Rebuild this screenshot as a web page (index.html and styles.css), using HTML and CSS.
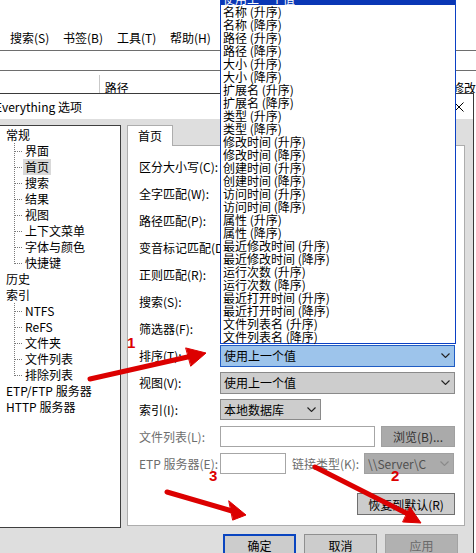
FILE: index.html
```html
<!DOCTYPE html>
<html lang="zh-CN">
<head>
<meta charset="utf-8">
<title>Everything 选项</title>
<link rel="stylesheet" href="styles.css">
</head>
<body>
<div class="screen">
  <div class="main">
    <div class="menubar">
      <span>搜索(S)</span><span>书签(B)</span><span>工具(T)</span><span>帮助(H)</span>
    </div>
    <div class="searchbar"></div>
    <div class="colheader">
      <span class="col-name"></span>
      <span class="col-path">路径</span>
      <span class="col-mod">修改</span>
    </div>
  </div>

  <div class="dialog">
    <div class="titlebar">
      <span class="title">Everything 选项</span>
      <svg class="close" viewBox="0 0 10 10"><path d="M0.5 0.5L9.5 9.5M9.5 0.5L0.5 9.5" stroke="#000" stroke-width="1" fill="none"/></svg>
    </div>
    <div class="dlgbody">
      <div class="content">
        <div class="tree">
          <div class="node">常规</div>
          <ul class="children">
            <li><span class="lab">界面</span></li>
            <li><span class="lab hl">首页</span></li>
            <li><span class="lab">搜索</span></li>
            <li><span class="lab">结果</span></li>
            <li><span class="lab">视图</span></li>
            <li><span class="lab">上下文菜单</span></li>
            <li><span class="lab">字体与颜色</span></li>
            <li><span class="lab">快捷键</span></li>
          </ul>
          <div class="node">历史</div>
          <div class="node">索引</div>
          <ul class="children">
            <li><span class="lab">NTFS</span></li>
            <li><span class="lab">ReFS</span></li>
            <li><span class="lab">文件夹</span></li>
            <li><span class="lab">文件列表</span></li>
            <li><span class="lab">排除列表</span></li>
          </ul>
          <div class="node">ETP/FTP 服务器</div>
          <div class="node">HTTP 服务器</div>
        </div>

        <div class="tabs">
          <div class="tabstrip"><div class="tab">首页</div></div>
          <div class="panel">
            <div class="row"><span class="lbl">区分大小写(C):</span></div>
            <div class="row"><span class="lbl">全字匹配(W):</span></div>
            <div class="row"><span class="lbl">路径匹配(P):</span></div>
            <div class="row"><span class="lbl">变音标记匹配(D):</span></div>
            <div class="row"><span class="lbl">正则匹配(R):</span></div>
            <div class="row"><span class="lbl">搜索(S):</span></div>
            <div class="row"><span class="lbl">筛选器(F):</span></div>
            <div class="row">
              <span class="lbl">排序(T):</span>
              <div class="combo wide focus"><span>使用上一个值</span><svg class="chev" viewBox="0 0 9 5"><polyline points="0.5,0.5 4.5,4.5 8.5,0.5" fill="none" stroke="#222" stroke-width="1.1"/></svg></div>
            </div>
            <div class="row">
              <span class="lbl">视图(V):</span>
              <div class="combo wide"><span>使用上一个值</span><svg class="chev" viewBox="0 0 9 5"><polyline points="0.5,0.5 4.5,4.5 8.5,0.5" fill="none" stroke="#222" stroke-width="1.1"/></svg></div>
            </div>
            <div class="row">
              <span class="lbl">索引(I):</span>
              <div class="combo small"><span>本地数据库</span><svg class="chev" viewBox="0 0 9 5"><polyline points="0.5,0.5 4.5,4.5 8.5,0.5" fill="none" stroke="#222" stroke-width="1.1"/></svg></div>
            </div>
            <div class="row">
              <span class="lbl dis">文件列表(L):</span>
              <div class="input filelist"></div>
              <div class="btn browse">浏览(B)...</div>
            </div>
            <div class="row">
              <span class="lbl dis">ETP 服务器(E):</span>
              <div class="input etp"></div>
              <span class="lbl2 dis">链接类型(K):</span>
              <div class="combo server"><span>\\Server\C</span><svg class="chev" viewBox="0 0 9 5"><polyline points="0.5,0.5 4.5,4.5 8.5,0.5" fill="none" stroke="#8a8a8a" stroke-width="1.1"/></svg></div>
            </div>
            <div class="restore-row"><div class="btn restore">恢复到默认(R)</div></div>
          </div>
        </div>
      </div>
      <div class="buttons">
        <div class="btn dlg default">确定</div>
        <div class="btn dlg">取消</div>
        <div class="btn dlg disabled">应用</div>
      </div>
    </div>
  </div>

  <ul class="droplist">
    <li class="sel">使用上一个值</li>
    <li>名称 (升序)</li>
    <li>名称 (降序)</li>
    <li>路径 (升序)</li>
    <li>路径 (降序)</li>
    <li>大小 (升序)</li>
    <li>大小 (降序)</li>
    <li>扩展名 (升序)</li>
    <li>扩展名 (降序)</li>
    <li>类型 (升序)</li>
    <li>类型 (降序)</li>
    <li>修改时间 (升序)</li>
    <li>修改时间 (降序)</li>
    <li>创建时间 (升序)</li>
    <li>创建时间 (降序)</li>
    <li>访问时间 (升序)</li>
    <li>访问时间 (降序)</li>
    <li>属性 (升序)</li>
    <li>属性 (降序)</li>
    <li>最近修改时间 (升序)</li>
    <li>最近修改时间 (降序)</li>
    <li>运行次数 (升序)</li>
    <li>运行次数 (降序)</li>
    <li>最近打开时间 (升序)</li>
    <li>最近打开时间 (降序)</li>
    <li>文件列表名 (升序)</li>
    <li>文件列表名 (降序)</li>
  </ul>

  <svg class="annot" viewBox="0 0 476 553">
    <g fill="#dc0000" stroke="#dc0000" stroke-linecap="round">
      <line x1="90" y1="379" x2="192" y2="356" stroke-width="5"/>
      <polygon points="186,348 206,353 191,366" stroke-width="1"/>
      <line x1="315" y1="467" x2="406" y2="513" stroke-width="5"/>
      <polygon points="403,522 421,523 410,507" stroke-width="1"/>
      <line x1="167" y1="492" x2="232" y2="511" stroke-width="5"/>
      <polygon points="229,501 246,515 233,520" stroke-width="1"/>
    </g>
    <g class="num">
      <text x="127" y="348">1</text>
      <text x="391" y="481">2</text>
      <text x="209" y="481">3</text>
    </g>
  </svg>
</div>
</body>
</html>
```
FILE: styles.css
```css
* { box-sizing: border-box; margin: 0; padding: 0; }
html, body { margin: 0; background: #fff; }
body {
  font-family: "Noto Sans CJK SC", "Noto Sans", sans-serif;
  font-size: 12px;
  color: #000;
}
ul { list-style: none; }

.screen {
  position: relative;
  width: 476px;
  height: 553px;
  overflow: hidden;
  background: #fff;
}

/* main window behind the dialog */
.main { padding-top: 28px; }
.menubar {
  display: grid;
  grid-template-columns: 53px 54px 53px auto;
  padding-left: 10px;
  height: 19px;
  line-height: 19px;
}
.searchbar {
  margin-top: 3px;
  height: 21px;
  border-top: 1px solid #6e6e6e;
  border-bottom: 1px solid #6e6e6e;
}
.colheader {
  display: flex;
  height: 22px;
  overflow: hidden;
  line-height: 14px;
}
.col-name { width: 101px; margin-top: 4px; border-right: 1px solid #c9c9c9; }
.col-path { width: 357px; padding: 10px 0 0 5px; }
.col-mod { padding-top: 10px; white-space: nowrap; }

/* dialog */
.dialog {
  margin-left: -8px;
  width: 482px;
  height: 470px;
  border: 1px solid #3a3a3a;
  background: #dedede;
}
.titlebar {
  display: flex;
  align-items: center;
  justify-content: space-between;
  height: 25px;
  background: #fff;
  padding: 0 9px 0 2px;
}
.title { line-height: 25px; white-space: nowrap; }
.close { width: 10px; height: 10px; display: block; }

.dlgbody { padding: 6px 8px 0 4px; }
.content { display: flex; gap: 6px; align-items: flex-start; }

/* tree */
.tree {
  width: 124px;
  height: 403px;
  border: 1px solid #3f3f3f;
  background: #fff;
  padding: 1px 0 0 8px;
  line-height: 16px;
  white-space: nowrap;
}
.node { height: 16px; }
.children li {
  position: relative;
  height: 16px;
  padding-left: 17px;
}
.children li::before {
  content: "";
  position: absolute;
  left: 9px;
  top: 8px;
  width: 8px;
  height: 1px;
  background: repeating-linear-gradient(to right, #7a7a7a 0 1px, transparent 1px 2px);
}
.children li::after {
  content: "";
  position: absolute;
  left: 8px;
  top: 0;
  width: 1px;
  height: 16px;
  background: repeating-linear-gradient(to bottom, #7a7a7a 0 1px, transparent 1px 2px);
}
.children li:last-child::after { height: 9px; }
.lab { display: inline-block; padding: 0 2px; }
.lab.hl { background: #d9d9d9; }

/* tabs */
.tabs { width: 338px; }
.tabstrip { height: 20px; }
.tab {
  position: relative;
  z-index: 1;
  width: 46px;
  height: 21px;
  border: 1px solid #adadad;
  border-bottom: none;
  background: #fff;
  text-align: center;
  line-height: 19px;
}
.panel {
  height: 381px;
  border: 1px solid #adadad;
  background: #fff;
  padding: 7px 9px 0 11px;
}
.row { display: flex; align-items: center; height: 27px; }
.lbl { width: 81px; flex: none; white-space: nowrap; }
.lbl2 { margin-left: 6px; width: 72px; flex: none; white-space: nowrap; }
.dis { color: #6d6d6d; }

.combo {
  display: flex;
  align-items: center;
  justify-content: space-between;
  height: 22px;
  border: 1px solid #8a8a8a;
  background: #cdcdcd;
  padding: 0 4px 0 3px;
  white-space: nowrap;
}
.combo.wide { width: 235px; }
.combo.small { width: 101px; height: 21px; }
.combo.focus { background: #9dc4eb; border-color: #1f5cc4; }
.combo.server {
  width: 90px;
  height: 21px;
  background: #ababab;
  border-color: #a0a0a0;
  color: #505050;
}
.chev { width: 9px; height: 5px; display: block; flex: none; }

.input {
  height: 21px;
  border: 1px solid #a6a6a6;
  background: #fff;
}
.input.filelist { width: 155px; }
.input.etp { width: 66px; }

.btn {
  display: flex;
  align-items: center;
  justify-content: center;
  white-space: nowrap;
}
.btn.browse {
  margin-left: 6px;
  width: 74px;
  height: 21px;
  background: #aaaaaa;
  border: 1px solid #a0a0a0;
  color: #333;
}
.restore-row { display: flex; justify-content: flex-end; margin-top: 16px; }
.btn.restore {
  width: 98px;
  height: 22px;
  background: #cccccc;
  border: 1px solid #6f6f6f;
}

.buttons {
  display: flex;
  justify-content: flex-end;
  gap: 8px;
  margin-top: 6px;
  padding-right: 7px;
}
.btn.dlg {
  width: 73px;
  height: 23px;
  background: #cccccc;
  border: 1px solid #8f8f8f;
}
.btn.dlg.default { border: 2px solid #0a45c0; }
.btn.dlg.disabled { background: #b1b1b1; border-color: #a3a3a3; color: #6a6a6a; }

/* dropped-down list of the sort combo */
.droplist {
  position: absolute;
  left: 220px;
  top: -9px;
  z-index: 5;
  width: 236px;
  border: 1px solid #0b40c4;
  background: #fff;
}
.droplist li {
  height: 13px;
  line-height: 13px;
  padding-left: 2px;
  white-space: nowrap;
}
.droplist li.sel { background: #0a37b5; color: #fff; }

/* red annotations */
.annot {
  position: absolute;
  left: 0;
  top: 0;
  width: 476px;
  height: 553px;
  z-index: 10;
  pointer-events: none;
}
.num text {
  fill: #dc0000;
  font-family: "Liberation Sans", sans-serif;
  font-weight: bold;
  font-size: 15px;
}
```
